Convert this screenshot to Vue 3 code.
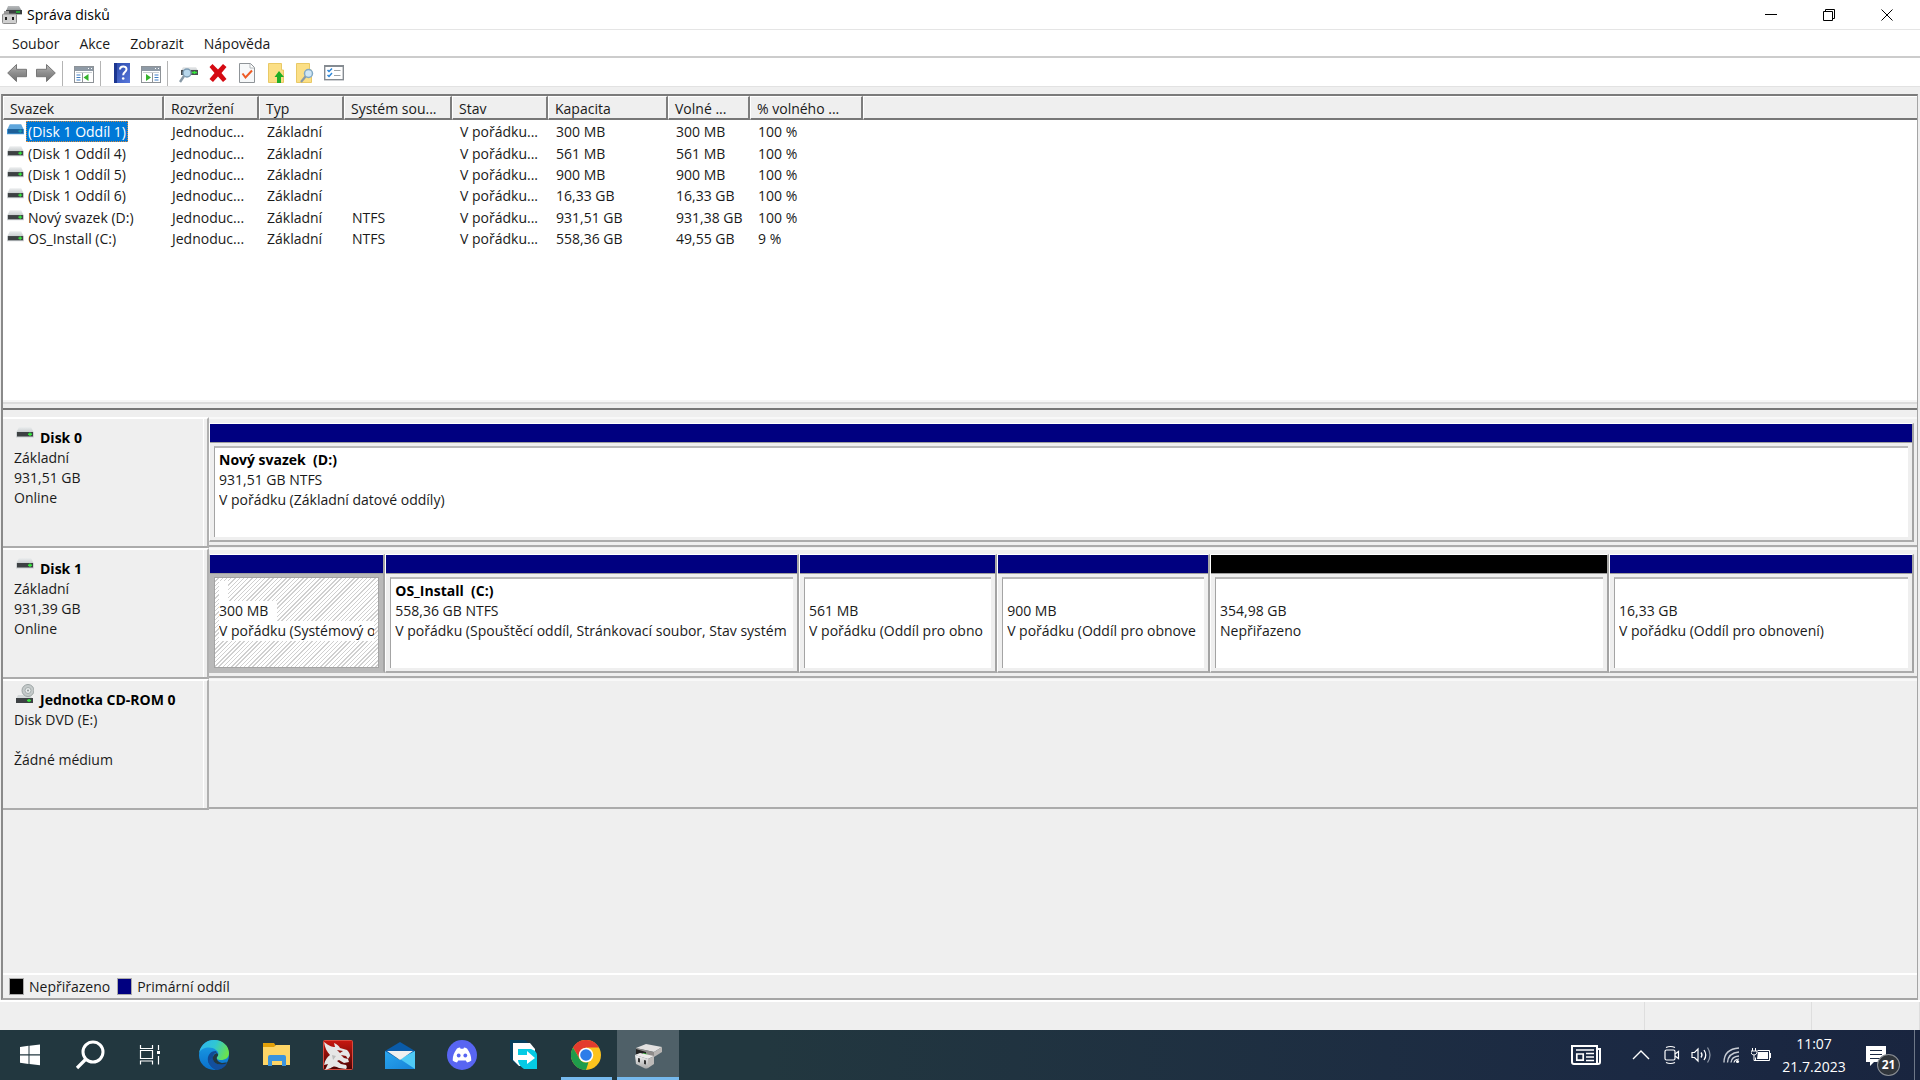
<script setup>
const menus = ['Soubor', 'Akce', 'Zobrazit', 'Nápověda']
const tools = [
  { id: 'back', label: 'Zpět', w: 20 },
  { id: 'forward', label: 'Vpřed', w: 20 },
  { sep: true },
  { id: 'tree', label: 'Zobrazit strom konzoly', w: 20 },
  { sep: true },
  { id: 'help', label: 'Nápověda', w: 16 },
  { id: 'pane', label: 'Zobrazit podokno akcí', w: 20 },
  { sep: true },
  { id: 'rescan', label: 'Prohledat disky', w: 20 },
  { id: 'delete', label: 'Odstranit', w: 18 },
  { id: 'check', label: 'Vlastnosti', w: 16 },
  { id: 'up', label: 'O úroveň výš', w: 16 },
  { id: 'find', label: 'Hledat', w: 18 },
  { id: 'list', label: 'Seznam', w: 20 },
]
const columns = [
  ['Svazek', 161], ['Rozvržení', 95], ['Typ', 85], ['Systém sou...', 108],
  ['Stav', 96], ['Kapacita', 120], ['Volné ...', 82], ['% volného ...', 113],
]
const volumes = [
  ['(Disk 1 Oddíl 1)', '', '300 MB', '300 MB', '100 %'],
  ['(Disk 1 Oddíl 4)', '', '561 MB', '561 MB', '100 %'],
  ['(Disk 1 Oddíl 5)', '', '900 MB', '900 MB', '100 %'],
  ['(Disk 1 Oddíl 6)', '', '16,33 GB', '16,33 GB', '100 %'],
  ['Nový svazek (D:)', 'NTFS', '931,51 GB', '931,38 GB', '100 %'],
  ['OS_Install (C:)', 'NTFS', '558,36 GB', '49,55 GB', '9 %'],
].map(([name, fs, cap, free, pct]) => ({
  name, cells: ['Jednoduc...', 'Základní', fs, 'V pořádku...', cap, free, pct],
}))
const disks = [
  {
    name: 'Disk 0', icon: 'drive', lines: ['Základní', '931,51 GB', 'Online'],
    parts: [{ grow: 1, name: 'Nový svazek\u00a0 (D:)', size: '931,51 GB NTFS', state: 'V pořádku (Základní datové oddíly)' }],
  },
  {
    name: 'Disk 1', icon: 'drive', lines: ['Základní', '931,39 GB', 'Online'],
    parts: [
      { grow: 175, size: '300 MB', state: 'V pořádku (Systémový o', selected: true },
      { grow: 415, name: 'OS_Install\u00a0 (C:)', size: '558,36 GB NTFS', state: 'V pořádku (Spouštěcí oddíl, Stránkovací soubor, Stav systém' },
      { grow: 197, size: '561 MB', state: 'V pořádku (Oddíl pro obno' },
      { grow: 212, size: '900 MB', state: 'V pořádku (Oddíl pro obnove' },
      { grow: 400, size: '354,98 GB', state: 'Nepřiřazeno', free: true },
      { grow: 305, size: '16,33 GB', state: 'V pořádku (Oddíl pro obnovení)' },
    ],
  },
  { name: 'Jednotka CD-ROM 0', icon: 'cd', lines: ['Disk DVD (E:)', '\u00a0', 'Žádné médium'], parts: [] },
]
const apps = [
  { id: 'edge', label: 'Microsoft Edge' },
  { id: 'explorer', label: 'Průzkumník souborů' },
  { id: 'dragon', label: 'Dragon Center' },
  { id: 'mail', label: 'Pošta' },
  { id: 'discord', label: 'Discord' },
  { id: 'transfer', label: 'Přenos' },
  { id: 'chrome', label: 'Google Chrome', state: 'open' },
  { id: 'diskmgmt', label: 'Správa disků', state: 'active' },
]
const tray = [
  ['chevron', 'Zobrazit skryté ikony'], ['meet', 'Kamera'], ['sound', 'Hlasitost'],
  ['wifi', 'Síť'], ['battery', 'Baterie'],
]
</script>

<template>
  <svg class="defs" aria-hidden="true">
    <defs>
      <linearGradient id="gTop" x1="0" y1="0" x2="0" y2="1"><stop offset="0" stop-color="#eceeef" /><stop offset="1" stop-color="#c3c8ca" /></linearGradient>
      <linearGradient id="gCase" x1="0" y1="0" x2="0" y2="1"><stop offset="0" stop-color="#b9bcbe" /><stop offset="1" stop-color="#8d9193" /></linearGradient>
      <linearGradient id="gArrow" x1="0" y1="0" x2="0" y2="1"><stop offset="0" stop-color="#b9b9b9" /><stop offset=".5" stop-color="#8e8e8e" /><stop offset="1" stop-color="#6f6f6f" /></linearGradient>
      <linearGradient id="gHelp" x1="0" y1="0" x2="1" y2="1"><stop offset="0" stop-color="#2847a8" /><stop offset="1" stop-color="#5878dc" /></linearGradient>
      <linearGradient id="gEdge" x1="0" y1=".2" x2="1" y2=".5"><stop offset="0" stop-color="#2fb5ee" /><stop offset=".5" stop-color="#30c6d4" /><stop offset="1" stop-color="#6be24b" /></linearGradient>
      <linearGradient id="gEdge2" x1="0" y1="0" x2="0" y2="1"><stop offset="0" stop-color="#1ba1e8" /><stop offset="1" stop-color="#0a6fcb" /></linearGradient>
      <linearGradient id="gRed" x1="0" y1="0" x2="0" y2="1"><stop offset="0" stop-color="#c8170f" /><stop offset="1" stop-color="#4b0303" /></linearGradient>
      <linearGradient id="gMail" x1="0" y1="0" x2="1" y2="1"><stop offset="0" stop-color="#2aa6ee" /><stop offset="1" stop-color="#1683d8" /></linearGradient>
      <linearGradient id="gBlk" x1="0" y1="0" x2="0" y2="1"><stop offset="0" stop-color="#f4f4f4" /><stop offset="1" stop-color="#a9a9a9" /></linearGradient>
    </defs>
    <symbol id="drive" viewBox="0 0 18 12">
      <path d="M3 0h12l3 6H0z" fill="url(#gTop)" /><path d="M0 5h18v5.500H0z" fill="#cfd3d5" />
      <rect x="1" y="5" width="16" height="4.500" fill="#3d4143" /><path d="M12 7.200h4M14 5.500v3.400" stroke="#35e83c" stroke-width="1.400" />
    </symbol>
    <symbol id="drive-sel" viewBox="0 0 18 12">
      <path d="M3 0h12l3 6H0z" fill="#5fa6dc" /><path d="M0 5h18v5.500H0z" fill="#4295d6" />
      <rect x="1" y="5" width="16" height="4.500" fill="#1d5f98" /><path d="M12 7.200h4M14 5.500v3.400" stroke="#1aa1a5" stroke-width="1.400" />
    </symbol>
    <symbol id="cd" viewBox="0 0 18 20">
      <path d="M2 11h12l3 4H0z" fill="#d5d9da" /><circle cx="12" cy="6.500" r="6" fill="#c5caca" stroke="#9da5a5" />
      <circle cx="12" cy="6.500" r="3" fill="#e8ecec" stroke="#a5adad" /><circle cx="12" cy="6.500" r="1" fill="#8b9292" />
      <rect x="0" y="14" width="17" height="5" fill="#3d4143" /><path d="M11 16.500h4M13 15v3" stroke="#35e83c" stroke-width="1.400" />
    </symbol>
    <symbol id="console" viewBox="0 0 20 20">
      <path d="M6 1h11l3 5H4z" fill="url(#gCase)" /><path d="M4 5h16v4H4z" fill="#3b3e40" /><path d="M4 9h16v1H4z" fill="#bbb" />
      <path d="M14 7h4" stroke="#22c436" stroke-width="1.500" /><path d="M2 6h5v3H2z" fill="#9a9a9a" />
      <rect x=".5" y="9" width="14" height="9.500" rx="1" fill="#cfcfcf" stroke="#8a8a8a" /><path d="M3 12h2v3H3zM10 12h2v3h-2z" fill="#222" />
    </symbol>
    <symbol id="back" viewBox="0 0 20 20"><path d="M.7 10 9.500 1.500v4.800h10v7.400h-10v4.800z" fill="url(#gArrow)" stroke="#777" /></symbol>
    <symbol id="forward" viewBox="0 0 20 20"><path d="M19.300 10 10.500 1.500v4.800H.5v7.400h10v4.800z" fill="url(#gArrow)" stroke="#777" /></symbol>
    <symbol id="tree" viewBox="0 0 20 20">
      <rect x=".5" y="3.500" width="19" height="16" fill="#fff" stroke="#8d9297" /><path d="M1 4h18v4H1z" fill="#8e9aa6" /><path d="M2 9.500h16" stroke="#c9ced2" />
      <path d="M14 5.500h1M17 5.500h1" stroke="#fff" /><path d="M8.500 10v9" stroke="#8d9297" /><path d="M2.500 12h4M2.500 14.500h4M2.500 17h4" stroke="#3c7cc4" /><path d="M14.500 11v7l-5-3.500z" fill="#36b32d" />
    </symbol>
    <symbol id="pane" viewBox="0 0 20 20">
      <rect x=".5" y="3.500" width="19" height="16" fill="#fff" stroke="#8d9297" /><path d="M1 4h18v4H1z" fill="#8e9aa6" /><path d="M2 9.500h16" stroke="#c9ced2" />
      <path d="M14 5.500h1M17 5.500h1" stroke="#fff" /><path d="M11.500 10v9" stroke="#8d9297" /><path d="M13.500 12h4M13.500 14.500h4M13.500 17h4" stroke="#3c7cc4" /><path d="M5 11v7l5-3.500z" fill="#36b32d" />
    </symbol>
    <symbol id="help" viewBox="0 0 16 20">
      <rect width="16" height="20" fill="url(#gHelp)" /><path d="M0 0h3v20H0z" fill="#1c3690" />
      <path d="M6 6.500c0-4 6.500-4 6.500-.3 0 3-3.300 2.800-3.300 6" fill="none" stroke="#fff" stroke-width="2" /><circle cx="9.200" cy="15.500" r="1.300" fill="#fff" />
    </symbol>
    <symbol id="rescan" viewBox="0 0 20 20">
      <path d="M4 4h13l2 4H2z" fill="url(#gTop)" /><path d="M2 7h17v5H2z" fill="#4a4e50" /><path d="M13 9.500h5M15.500 8v3" stroke="#35e83c" stroke-width="1.400" />
      <circle cx="8" cy="10" r="4" fill="#b7d7ec" stroke="#7e9db4" stroke-width="1.500" /><path d="M5 13 1 19" stroke="#8899a6" stroke-width="2.400" />
    </symbol>
    <symbol id="delete" viewBox="0 0 18 20"><path d="M3.500 1 9 6.500 14 1l3.500 3-5 6 5 6-3.500 3-5-5.500L4 19l-3.500-3 5-6-5-6z" fill="#d50a12" /></symbol>
    <symbol id="check" viewBox="0 0 16 20"><path d="M.5.500h11l4 4v15H.5z" fill="#f6f8f9" stroke="#8f9498" /><path d="M11 1v4h4" fill="#fff" stroke="#b4b8bb" /><path d="m3.500 10.500 3 4 6.500-7" fill="none" stroke="#ee5a24" stroke-width="2" /></symbol>
    <symbol id="up" viewBox="0 0 16 20"><path d="M.5.500h13V7h2v12.500H.5z" fill="#fbdf86" stroke="#e9c966" /><path d="m11 8 5 6h-3v6H9v-6H6.500z" fill="#1fae26" /></symbol>
    <symbol id="find" viewBox="0 0 18 20"><path d="M.5.500h13V7h2v12.500H.5z" fill="#fbdf86" stroke="#e9c966" /><circle cx="12.500" cy="10.500" r="4" fill="#cfe6f5" stroke="#83a9c4" stroke-width="1.500" /><path d="M9.500 13.500 5 19" stroke="#8899a6" stroke-width="2.200" /></symbol>
    <symbol id="list" viewBox="0 0 20 20"><rect x=".7" y="2.700" width="18.600" height="14" fill="#fff" stroke="#858b91" stroke-width="1.400" /><path d="M1 3h18" stroke="#858b91" stroke-width="2" /><path d="m3.500 7 1.500 1.500L8 5.500M3.500 12 5 13.500 8 10" fill="none" stroke="#2c86d8" stroke-width="1.500" /><path d="M10 7.500h6.500M10 12.500h6.500" stroke="#9ca2a7" /></symbol>

    <symbol id="edge" viewBox="0 0 30 30">
      <circle cx="15" cy="15" r="15" fill="url(#gEdge2)" />
      <path d="M0 13C2 4 8 0 15 0c9 0 15 6 15 13 0 5-4 7-8 7-3 0-5-1-4-3 2-2 2-5-1-7C12 6 3 7 0 13z" fill="url(#gEdge)" />
      <path d="M17 11c-6 0-9 5-8 10 1 4 5 8 9 9 5-1 9-4 10-7-5 3-14 2-14-5 0-3 1-5 4-5z" fill="#114a94" />
      <path d="M18 13c-5 1-6 8 0 11 4 1 8 1 10-1-1-1-3 0-5 0-4-1-6-4-5-6 2-2 1-3 0-4z" fill="#22373f" />
      <path d="M9 21c1 4 5 8 9 9 5-1 9-4 10-7-6 3-14 2-15-5z" fill="#134f9d" />
    </symbol>
    <symbol id="explorer" viewBox="0 0 30 30">
      <path d="M2 3h11l2 3v3H2z" fill="#e3a008" /><path d="M2 7h11l2-2h14v20H2z" fill="#fed566" />
      <path d="M7 26V17q0-2 2-2h14q2 0 2 2v9h-4v-5H11v5z" fill="#3b93dd" /><path d="M11 21h10v4H11z" fill="#fed566" />
    </symbol>
    <symbol id="dragon" viewBox="0 0 30 30">
      <rect x=".5" y=".5" width="29" height="29" rx="1" fill="url(#gRed)" stroke="#d84a3e" />
      <path d="M1 2c5 4 8 5 11 5L11 3c3 1 5 3 6 5l7 2c2 2 3 4 3 6l-2 3-2-3-5-1 3 3 4 1 1 3-5 1-5-3-2 1 4 3 5 1c1 1 1 3 0 4l-7-1c-3-2-6-2-8 0l-6 2 3-6-4 1c1-5 3-8 6-10C4 12 2 8 1 2z" fill="#e6e6e6" />
      <path d="m14 10 6 1-3 2z" fill="#8d120d" /><path d="m9 15 4 1-3 4z" fill="#bdbdbd" />
    </symbol>
    <symbol id="mail" viewBox="0 0 30 30">
      <path d="m0 11 15-9 15 9-4 6H4z" fill="#0a5ba8" /><path d="m0 11 15 9 15-9v18H0z" fill="url(#gMail)" /><path d="M30 11v18L15 19z" fill="#4fcaf5" /><path d="M2 11h26l-13 9z" fill="#f0f0f0" />
    </symbol>
    <symbol id="discord" viewBox="0 0 30 30">
      <circle cx="15" cy="15" r="15" fill="#5865f2" />
      <path d="M10 8.500q1.700-.8 3-1l.6 1.200h2.800l.6-1.200q1.300.2 3 1c3 4 4.300 7.500 4.300 12-2 1.500-3.300 1.800-4.300 2l-1.200-2h-7.600l-1.200 2c-1-.2-2.300-.5-4.300-2 0-4.500 1.300-8 4.300-12z" fill="#fff" />
      <circle cx="11.700" cy="15.500" r="1.900" fill="#5865f2" /><circle cx="18.300" cy="15.500" r="1.900" fill="#5865f2" />
    </symbol>
    <symbol id="transfer" viewBox="0 0 30 30">
      <path d="M1 0h15l6 5H8v20l-7-6z" fill="#06405f" /><path d="M4 3h17l5 6v17H10l-6-6z" fill="#fff" />
      <path d="M9 9h13q6 2 6 6v14H15q-6-4-6-9z" fill="#05cbe4" /><path d="M9 15h9v-4l8 7-8 6v-4H9z" fill="#fff" />
    </symbol>
    <symbol id="chrome" viewBox="0 0 30 30">
      <circle cx="15" cy="15" r="15" fill="#fcc31e" /><path d="M2 7.500A15 15 0 0 1 28 7.500H15l-6.500 11z" fill="#e33b2e" />
      <path d="M2 7.500 8.500 18.700q3 5 9 3.600L15 30A15 15 0 0 1 2 7.500z" fill="#1f9c4b" /><circle cx="15" cy="15" r="7.300" fill="#fff" /><circle cx="15" cy="15" r="5.800" fill="#2d7de9" />
    </symbol>
    <symbol id="diskmgmt" viewBox="0 0 30 30">
      <path d="m3 8 10-4 16 3-8 5z" fill="#e3e1e0" /><path d="m21 12 8-5v5l-8 5z" fill="#b8b5b3" /><path d="m3 8 18 4v5L3 14z" fill="#8f8c8a" /><path d="m3 9 10 3v4L3 14z" fill="#222" /><path d="m10 14 4 1" stroke="#3bd13b" stroke-width="2" />
      <path d="m2 15 5-2 14 3-6 3z" fill="#eceae9" /><path d="m2 15 13 4v9q-2 1-4 0L3 24z" fill="url(#gBlk)" /><path d="m15 19 6-3v8l-6 4z" fill="#bdbab8" /><path d="m5 18 2 .5v4l-2-.5zM11 20l2 .5v4l-2-.5z" fill="#333" />
    </symbol>
    <symbol id="start" viewBox="0 0 30 30"><path d="m5 7 8.500-1.200v8.500H5zM14.500 5.700 25 4.500v9.800H14.500zM5 15.400h8.500v8.500L5 22.800zM14.500 15.400H25v9.800L14.500 24z" fill="#fff" /></symbol>
    <symbol id="search" viewBox="0 0 30 30"><circle cx="18" cy="12" r="10" fill="none" stroke="#fff" stroke-width="3" /><path d="M10.500 19.500 2 28" stroke="#fff" stroke-width="3.200" /></symbol>
    <symbol id="taskview" viewBox="0 0 30 30"><path d="M5.500 5v3.500h12V5M5.500 24.500V21h12v3.500M5.500 10.500h12v8h-12zM23.500 5v5M23.500 16v8.500" fill="none" stroke="#fff" stroke-width="1.200" /><path d="M22 11h3v3h-3z" fill="#fff" /></symbol>

    <symbol id="news" viewBox="0 0 30 20"><path d="M1 1h25v18H3q-2 0-2-2zM26 4h3v13q0 2-2 2h-2" fill="none" stroke="#fff" stroke-width="2" /><path d="M5 5h18M15 8.500h8M15 12h8M15 15.500h8" stroke="#fff" stroke-width="1.500" /><path d="M5.800 9h6.400v6.200H5.800z" fill="none" stroke="#fff" stroke-width="1.700" /></symbol>
    <symbol id="chevron" viewBox="0 0 20 20"><path d="m2 14 8-8 8 8" fill="none" stroke="#fff" stroke-width="1.400" /></symbol>
    <symbol id="meet" viewBox="0 0 20 20"><rect x="4" y="5" width="10" height="10" rx="1.500" fill="none" stroke="#fff" stroke-width="1.200" /><path d="m14 9 3.500-2.500v7L14 11" fill="none" stroke="#fff" stroke-width="1.200" /><path d="M5 2.500q4.500-2 9 0M5 17.500q4.500 2 9 0" fill="none" stroke="#fff" stroke-width="1.200" /></symbol>
    <symbol id="sound" viewBox="0 0 20 20"><path d="M1 7.500h2.500L7 4v12l-3.500-3.500H1z" fill="none" stroke="#fff" stroke-width="1.200" /><path d="M10 7.500q2 2.500 0 5M13 5q3.500 5 0 10" fill="none" stroke="#fff" stroke-width="1.300" /><path d="M16.500 2.500q5 7.500 0 15" fill="none" stroke="#8b94a3" stroke-width="1.300" /></symbol>
    <symbol id="wifi" viewBox="0 0 20 20"><path d="M3 17.500Q3 4 18 3M6.500 17.500Q7 8 18 7M10 17.500q.5-6 8-6.500" fill="none" stroke="#c7ccd4" stroke-width="1.400" /><path d="M13 17.500q.5-3 5-3.500" fill="none" stroke="#fff" stroke-width="1.200" /><circle cx="16.500" cy="16.500" r="1.600" fill="#fff" /></symbol>
    <symbol id="battery" viewBox="0 0 20 20"><path d="M6.500 5.500h12v10h-14v-3" fill="none" stroke="#fff" /><path d="M7 7h10v7H6zM19 8h1v5h-1z" fill="#fff" /><path d="M1.500 3v3M4.500 3v3M0 6h6v2q-1 2-3 2T0 8zM3 10v5.500h2" fill="none" stroke="#fff" /></symbol>
    <symbol id="note" viewBox="0 0 24 24"><path d="M2 3h20v16H10l-4 4v-4H2z" fill="#fff" /><path d="M6 7.500h12M6 11.500h12M6 15.500h12" stroke="#1b2943" stroke-width="1.200" /></symbol>
  </svg>

  <div class="screen">
    <div class="window">
      <header class="titlebar">
        <svg class="app-icon"><use href="#console" /></svg>
        <h1>Správa disků</h1>
        <div class="controls">
          <button aria-label="Minimalizovat"><svg viewBox="0 0 12 12"><path d="M0 5.500h12" /></svg></button>
          <button aria-label="Obnovit"><svg viewBox="0 0 12 12"><path d="M.5 2.500h9v9h-9zM2.500 2.500v-2h9v9h-2" /></svg></button>
          <button aria-label="Zavřít"><svg viewBox="0 0 12 12"><path d="m.5.500 11 11M11.500.500l-11 11" /></svg></button>
        </div>
      </header>
      <nav class="menubar"><button v-for="m in menus" :key="m">{{ m }}</button></nav>
      <div class="toolbar">
        <template v-for="(t, i) in tools" :key="i">
          <span v-if="t.sep" class="sep"></span>
          <button v-else :aria-label="t.label"><svg :style="{ width: t.w + 'px' }"><use :href="'#' + t.id" /></svg></button>
        </template>
      </div>

      <main class="content">
        <section class="volumes">
          <table>
            <colgroup><col v-for="c in columns" :key="c[0]" :style="{ width: c[1] + 'px' }" /><col /></colgroup>
            <thead><tr><th v-for="c in columns" :key="c[0]" scope="col">{{ c[0] }}</th><td class="rest"></td></tr></thead>
            <tbody>
              <tr v-for="(v, i) in volumes" :key="v.name" :class="{ selected: i === 0 }">
                <td class="name"><div><svg><use :href="i === 0 ? '#drive-sel' : '#drive'" /></svg><span>{{ v.name }}</span></div></td>
                <td v-for="(c, j) in v.cells" :key="j">{{ c }}</td>
                <td></td>
              </tr>
            </tbody>
          </table>
        </section>
        <div class="splitter"></div>
        <section class="disks">
          <article v-for="d in disks" :key="d.name" class="disk">
            <div class="info">
              <h2><svg :class="d.icon"><use :href="'#' + d.icon" /></svg>{{ d.name }}</h2>
              <p v-for="l in d.lines" :key="l">{{ l }}</p>
            </div>
            <div class="parts">
              <div v-for="(p, i) in d.parts" :key="i" class="part" :class="{ selected: p.selected, free: p.free }" :style="{ flexGrow: p.grow }">
                <div class="bar"></div>
                <div class="box">
                  <p class="title"><span>{{ p.name || '\u00a0' }}</span></p>
                  <p><span>{{ p.size }}</span></p>
                  <p><span>{{ p.state }}</span></p>
                </div>
              </div>
            </div>
          </article>
        </section>
        <footer class="legend">
          <i></i><span>Nepřiřazeno</span><i class="primary"></i><span>Primární oddíl</span>
        </footer>
      </main>
      <div class="status"><span></span><span></span><span></span></div>
    </div>

    <footer class="taskbar">
      <div class="system">
        <button aria-label="Start"><svg><use href="#start" /></svg></button>
        <button aria-label="Hledat"><svg><use href="#search" /></svg></button>
        <button aria-label="Zobrazení úloh"><svg><use href="#taskview" /></svg></button>
      </div>
      <button v-for="a in apps" :key="a.id" class="task" :class="a.state" :aria-label="a.label"><svg><use :href="'#' + a.id" /></svg></button>
      <div class="tray">
        <button class="news" aria-label="Zprávy"><svg><use href="#news" /></svg></button>
        <button v-for="t in tray" :key="t[0]" class="small" :aria-label="t[1]"><svg><use :href="'#' + t[0]" /></svg></button>
        <div class="clock"><time>11:07</time><time>21.7.2023</time></div>
        <button class="notes" aria-label="Centrum akcí"><svg><use href="#note" /></svg><span class="badge">21</span></button>
        <span class="desktop"></span>
      </div>
    </footer>
  </div>
</template>

<style>
body { margin: 0; background: #f0f0f0; }
</style>

<style scoped>
* { box-sizing: border-box; }
.defs { position: absolute; width: 0; height: 0; }
.screen { min-height: 100vh; display: flex; flex-direction: column; background: #efefef; color: #1a1a1a; font: 14px/20px "Open Sans", "Noto Sans", sans-serif; }
.window { flex: 1; display: flex; flex-direction: column; }
button { border: 0; padding: 0; background: none; font: inherit; color: inherit; display: flex; align-items: center; justify-content: center; }
h1, h2, p { margin: 0; font-size: 14px; }
svg { display: block; flex: none; }

.titlebar { height: 30px; display: flex; align-items: center; background: #fff; border-bottom: 1px solid #e5e5e5; padding-left: 2px; color: #000; }
.titlebar h1 { font-weight: 400; margin-left: 5px; }
.app-icon { width: 20px; height: 20px; }
.controls { margin-left: auto; display: flex; padding-right: 4px; }
.controls button { width: 58px; height: 28px; }
.controls svg { width: 12px; height: 12px; fill: none; stroke: #000; }
.menubar { height: 28px; display: flex; align-items: center; background: #fff; padding: 2px 0 0 2px; border-bottom: 2px solid #ccc; }
.menubar button { padding: 0 10px; height: 24px; }
.toolbar { height: 29px; display: flex; align-items: center; padding: 2px 0 0 2px; background: #fff; border-bottom: 1px solid #e2e2e2; }
.toolbar svg { height: 20px; }
.toolbar button { width: 29px; height: 24px; }
.toolbar .sep { width: 1px; height: 25px; margin: 0 6px 0 2px; background: #b4b4b4; }

.content { flex: 1; display: flex; flex-direction: column; margin: 7px 2px 0 1px; border: 2px solid #a5a5a5; border-top-color: #7b7b7b; border-left-color: #8a8a8a; border-right-width: 1px; }
.volumes { flex: none; min-height: 304px; background: #fff; }
table { width: 100%; table-layout: fixed; border-collapse: separate; border-spacing: 0; }
th, .rest { height: 24px; background: #efefef; border-bottom: 2px solid #777; border-top: 1px solid #fff; border-left: 1px solid #fff; }
th { padding: 3px 0 0 6px; text-align: left; font-weight: 400; line-height: 18px; border-right: 2px solid #7d7d7d; white-space: nowrap; }
tbody { line-height: 21px; }
tbody td { padding: 0 0 0 8px; white-space: nowrap; height: 21px; }
tbody tr:first-child td { padding-top: 1px; height: 22px; }
tbody tr:nth-child(3n+2) td { height: 22px; }
tbody td.name { padding-left: 4px; }
.name div { display: flex; }
.name svg { width: 17px; height: 12px; margin-top: 3px; }
.name span { padding: 0 2px; margin-left: 2px; }
.selected .name span { background: #0078d7; color: #fff; outline: 1px dotted #d88a3c; outline-offset: -1px; }
.splitter { height: 10px; background: #efefef; border-top: 2px solid #f6f6f6; border-bottom: 2px solid #777; box-shadow: inset 0 2px #dcdcdc; }
.disks { flex: 1; padding-top: 7px; }
.disk { display: flex; height: 131px; }
.info { width: 206px; flex: none; border-top: 2px solid #fff; border-bottom: 2px solid #ababab; border-right: 2px solid #b0b0b0; box-shadow: inset -3px 0 #efefef, inset -4px 0 #fff; padding: 9px 0 0 11px; white-space: nowrap; }
.info h2 { display: flex; gap: 6px; padding-left: 2px; color: #000; }
.info h2 svg { width: 18px; height: 12px; margin-top: -1px; }
.info h2 .cd { height: 20px; margin-top: -6px; }
.parts { flex: 1; min-width: 0; display: flex; border-top: 2px solid #f8f8f8; border-bottom: 2px solid #ababab; padding: 4px 3px 3px 0; margin-bottom: 1px; }
.part { flex: 1 1 0; min-width: 0; display: flex; flex-direction: column; border: 1px solid #fff; border-right: 2px solid #a4a4a4; border-bottom: 2px solid #ababab; background: #efefef; }
.bar { height: 19px; background: #000080; border-bottom: 1px solid #a0a0a0; }
.free .bar { background: #000; }
.box { flex: 1; margin: 3px 4px; border-top: 2px solid #b9b9b9; border-left: 1px solid #a4a4a4; background: #fff; padding: 2px 4px; }
.box p { overflow: hidden; white-space: nowrap; }
.title { font-weight: 700; color: #000; }
.part.selected { background: #b9b9b9; border-bottom-color: #b9b9b9; border-left-color: #b9b9b9; }
.selected .box { background: repeating-linear-gradient(135deg, #fff 0 2px, #d0d0d0 2px 3px); border: 1px solid #a4a4a4; padding-top: 3px; }
.selected .box span { display: inline-block; background: #fff; padding-right: 9px; vertical-align: top; }
.selected .title span { padding-right: 5px; }
.legend { height: 25px; display: flex; align-items: center; border-top: 2px solid #fff; padding-left: 6px; }
.legend i { width: 15px; height: 17px; background: #000; border: 1px solid #aaa; margin-right: 5px; }
.legend .primary { background: #000080; margin-left: 7px; }
.status { height: 30px; display: flex; border-top: 2px solid #fff; }
.status span { border-right: 1px solid #dedede; width: 167px; }
.status span:first-child { width: auto; flex: 1; }
.status span:last-child { width: 108px; }

.taskbar { height: 50px; display: flex; background: linear-gradient(90deg, #22373f 0, #22373f 40%, #1b2943 85%, #19253f 100%); color: #fff; }
.system { display: flex; padding-right: 3px; }
.system button { width: 60px; height: 50px; }
.taskbar svg { width: 30px; height: 30px; }
.task { width: 62px; height: 50px; position: relative; }
.active { background: #4f6068; }
.active::after, .open::after { content: ""; position: absolute; left: 0; right: 0; bottom: 0; height: 3px; background: #76b9ed; }
.open::after { left: 6px; right: 5px; }
.tray { margin-left: auto; display: flex; align-items: stretch; }
.tray .news { width: 30px; margin-right: 40px; }
.tray .news svg { height: 20px; }
.tray .small { width: 30px; }
.tray .small svg { width: 20px; height: 20px; }
.tray .small:nth-child(2) { margin-left: -15px; }
.clock { width: 76px; display: flex; flex-direction: column; align-items: center; padding-top: 2px; line-height: 23px; }
.notes { width: 48px; position: relative; }
.tray .notes svg { width: 24px; height: 24px; }
.badge { position: absolute; left: 25px; top: 24px; width: 23px; height: 22px; border: 1px solid #8b8f95; border-radius: 50%; background: #30353b; font-size: 12px; font-weight: 700; text-align: center; }
.desktop { width: 6px; margin-left: 14px; border-left: 1px solid #6e7888; }
</style>
